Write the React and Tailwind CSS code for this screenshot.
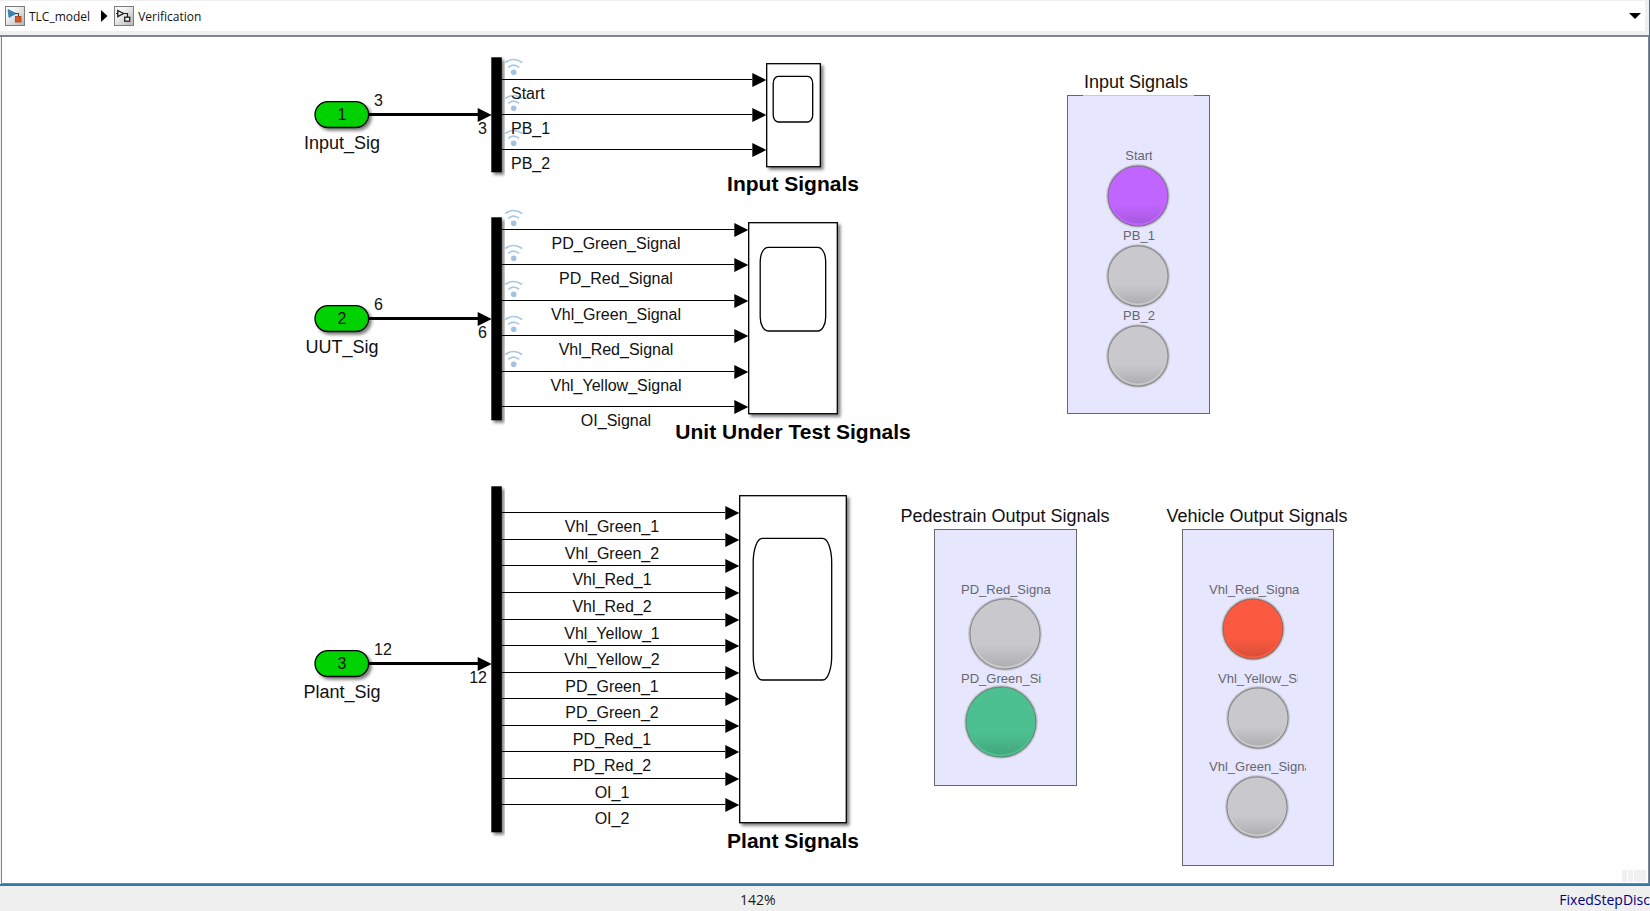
import React from "react";

// Diagram coordinates are window based; the canvas starts below the path bar.
const ORIGIN_X = 2;
const ORIGIN_Y = 37;
const place = (x, y) => ({ left: x - ORIGIN_X, top: y - ORIGIN_Y });

const ANCHOR = {
  left: "",
  center: "-translate-x-1/2",
  right: "-translate-x-full",
};

const TEXT = {
  lamp: { cls: "text-[13px] leading-5 text-[#66666e]", base: 14 },
  signal: { cls: "text-[16px] leading-5 text-[#111111]", base: 15 },
  block: { cls: "text-[18px] leading-5 text-[#111111]", base: 16 },
  title: { cls: "text-[21px] leading-6 font-bold text-black", base: 19 },
};

function Label({ kind, x, y, anchor = "center", children }) {
  const t = TEXT[kind];
  return (
    <span className={`absolute whitespace-nowrap ${t.cls} ${ANCHOR[anchor]}`} style={place(x, y - t.base)}>
      {children}
    </span>
  );
}

const groups = [
  {
    port: "1",
    name: "Input_Sig",
    width: "3",
    busY: 114,
    bar: [57, 172],
    title: "Input Signals",
    titleX: 793,
    titleY: 191,
    scope: { x: 766, y: 63, w: 55, h: 104 },
    screen: { x: 773, y: 76, w: 40, h: 46, rx: 5, ry: 7 },
    labelX: 511,
    labelAnchor: "left",
    signals: [
      ["Start", 79, 72],
      ["PB_1", 114, 108],
      ["PB_2", 149, 143],
    ],
  },
  {
    port: "2",
    name: "UUT_Sig",
    width: "6",
    busY: 318,
    bar: [217, 420],
    title: "Unit Under Test Signals",
    titleX: 793,
    titleY: 439,
    scope: { x: 748, y: 222, w: 90, h: 192 },
    screen: { x: 760, y: 247, w: 66, h: 84, rx: 8, ry: 14 },
    labelX: 616,
    labelAnchor: "center",
    signals: [
      ["PD_Green_Signal", 229, 223],
      ["PD_Red_Signal", 264, 258],
      ["Vhl_Green_Signal", 300, 294],
      ["Vhl_Red_Signal", 335, 329],
      ["Vhl_Yellow_Signal", 371, 364],
      ["OI_Signal", 406, null],
    ],
  },
  {
    port: "3",
    name: "Plant_Sig",
    width: "12",
    busY: 663,
    bar: [486, 832],
    title: "Plant Signals",
    titleX: 793,
    titleY: 848,
    scope: { x: 739, y: 495, w: 108, h: 328 },
    screen: { x: 753, y: 538, w: 79, h: 142, rx: 9, ry: 24 },
    labelX: 612,
    labelAnchor: "center",
    signals: [
      ["Vhl_Green_1", 512, null],
      ["Vhl_Green_2", 539, null],
      ["Vhl_Red_1", 565, null],
      ["Vhl_Red_2", 592, null],
      ["Vhl_Yellow_1", 619, null],
      ["Vhl_Yellow_2", 645, null],
      ["PD_Green_1", 672, null],
      ["PD_Green_2", 698, null],
      ["PD_Red_1", 725, null],
      ["PD_Red_2", 751, null],
      ["OI_1", 778, null],
      ["OI_2", 804, null],
    ],
  },
];

const panels = [
  {
    title: "Input Signals",
    titleX: 1136,
    titleY: 88,
    box: [1067, 95, 143, 319],
    gap: true,
    lamps: [
      { text: "Start", x: 1139, y: 160, cx: 1138.5, cy: 195.5, r: 32, color: "#c065ff" },
      { text: "PB_1", x: 1139, y: 240, cx: 1138.5, cy: 275.5, r: 32, color: "#c9c9cd" },
      { text: "PB_2", x: 1139, y: 320, cx: 1138.5, cy: 355.5, r: 32, color: "#c9c9cd" },
    ],
  },
  {
    title: "Pedestrain Output Signals",
    titleX: 1005,
    titleY: 522,
    box: [934, 529, 143, 257],
    lamps: [
      { text: "PD_Red_Signa", x: 961, y: 594, clip: 92, cx: 1005.8, cy: 633.8, r: 37, color: "#c9c9cd" },
      { text: "PD_Green_Si", x: 961, y: 683, clip: 92, cx: 1001, cy: 722.3, r: 37, color: "#4cc090" },
    ],
  },
  {
    title: "Vehicle Output Signals",
    titleX: 1257,
    titleY: 522,
    box: [1182, 529, 152, 337],
    lamps: [
      { text: "Vhl_Red_Signa", x: 1209, y: 594, clip: 92, cx: 1253.5, cy: 629.3, r: 32, color: "#fb5a40" },
      { text: "Vhl_Yellow_Si", x: 1218, y: 683, clip: 80, cx: 1258.3, cy: 718, r: 32, color: "#c9c9cd" },
      { text: "Vhl_Green_Signa", x: 1209, y: 771, clip: 97, cx: 1257.5, cy: 806.5, r: 32, color: "#c9c9cd" },
    ],
  },
];

function Arrow({ x, y }) {
  return <path d={`M${x - 14} ${y - 7}L${x} ${y}L${x - 14} ${y + 7}Z`} fill="#000" />;
}

function LogIcon({ x, y }) {
  return (
    <g fill="none" stroke="#a9c8e5" strokeWidth="1.6">
      <path d={`M${x - 8.5} ${y - 9.5}Q${x} ${y - 15.5} ${x + 8.5} ${y - 9.5}`} />
      <path d={`M${x - 5.5} ${y - 4.6}Q${x} ${y - 9.2} ${x + 5.5} ${y - 4.6}`} />
      <circle cx={x} cy={y + 0.2} r="2.8" fill="#a3c2e1" stroke="none" />
    </g>
  );
}

function Wiring() {
  return (
    <svg className="absolute left-0 top-0" width="900" height="840" viewBox="2 37 900 840" aria-hidden="true">
      <defs>
        <filter id="shade" x="-20%" y="-20%" width="150%" height="150%">
          <feDropShadow dx="2.5" dy="2.5" stdDeviation="1.6" floodColor="#000" floodOpacity="0.5" />
        </filter>
      </defs>
      {groups.map((g) => (
        <g key={g.port}>
          <rect x="315" y={g.busY - 12.3} width="53.6" height="25.8" rx="12.9" fill="#00d100" stroke="#000" strokeWidth="1.3" filter="url(#shade)" />
          <path d={`M369 ${g.busY + 0.5}H478`} stroke="#000" strokeWidth="3" />
          <rect x="491.3" y={g.bar[0] + 0.3} width="10.5" height={g.bar[1] - g.bar[0]} fill="#000" filter="url(#shade)" />
          <Arrow x={491.7} y={g.busY + 0.9} />
          <rect x={g.scope.x + 0.7} y={g.scope.y + 0.7} width={g.scope.w - 1.4} height={g.scope.h - 1} fill="#fff" stroke="#000" strokeWidth="1.3" filter="url(#shade)" />
          <rect x={g.screen.x + 0.2} y={g.screen.y + 0.4} width={g.screen.w - 0.5} height={g.screen.h - 0.4} rx={g.screen.rx} ry={g.screen.ry} fill="#fff" stroke="#000" strokeWidth="1.3" />
          {g.signals.map(([name, y, dot]) => (
            <g key={name}>
              <path d={`M502 ${y + 0.5}H${g.scope.x - 14}`} stroke="#000" strokeWidth="1" />
              <Arrow x={g.scope.x + 0.3} y={y + 1} />
              {dot !== null && <LogIcon x={513.7} y={dot} />}
            </g>
          ))}
        </g>
      ))}
    </svg>
  );
}

function Lamp({ lamp }) {
  const size = lamp.r * 2 + 2;
  const id = `glow-${lamp.text}`;
  return (
    <svg className="absolute" style={place(Math.floor(lamp.cx - lamp.r - 1), Math.round(lamp.cy - lamp.r - 1))} width={size} height={size} viewBox={`${-size / 2} ${-size / 2} ${size} ${size}`} role="img" aria-label={lamp.text}>
      <defs>
        <linearGradient id={id} x1="0" y1="0" x2="0" y2="1">
          <stop offset="0.66" stopColor="#000" stopOpacity="0" />
          <stop offset="1" stopColor="#000" stopOpacity="0.13" />
        </linearGradient>
      </defs>
      <circle r={lamp.r} fill="#cbcbd3" />
      <circle r={lamp.r - 1.9} fill={lamp.color} stroke="#55555a" strokeOpacity="0.55" strokeWidth="1.2" />
      <circle r={lamp.r - 4.5} fill={`url(#${id})`} />
    </svg>
  );
}

function Panel({ panel }) {
  const [x, y, w, h] = panel.box;
  return (
    <section aria-label={panel.title}>
      <div className="absolute border border-[#66666f] bg-[#e6e6ff]" style={{ ...place(x, y), width: w, height: h }} />
      {panel.gap && <div className="absolute h-px bg-[#c9c9dc]" style={{ ...place(x + 16, y), width: w - 32 }} />}
      <Label kind="block" x={panel.titleX} y={panel.titleY}>
        {panel.title}
      </Label>
      {panel.lamps.map((lamp) => (
        <React.Fragment key={lamp.text}>
          <span
            className={`absolute overflow-hidden whitespace-nowrap ${TEXT.lamp.cls} ${lamp.clip ? "" : "-translate-x-1/2"}`}
            style={{ ...place(lamp.x, lamp.y - TEXT.lamp.base), width: lamp.clip }}
          >
            {lamp.text}
          </span>
          <Lamp lamp={lamp} />
        </React.Fragment>
      ))}
    </section>
  );
}

function IconFrame({ id, children }) {
  return (
    <svg className="size-5 shrink-0" viewBox="0 0 20 20" aria-hidden="true">
      <defs>
        <linearGradient id={id} x1="0" y1="0" x2="1" y2="1">
          <stop offset="0.3" stopColor="#f6f6f6" />
          <stop offset="1" stopColor="#b4b4b4" />
        </linearGradient>
      </defs>
      <rect x="0.5" y="0.5" width="19" height="19" fill={`url(#${id})`} stroke="#7d7d7d" />
      {children}
    </svg>
  );
}

function PathBar() {
  return (
    <header className="flex h-[37px] items-start border-b-2 border-[#7f8490] bg-[#efefef] pt-px pr-1">
      <nav aria-label="Model path" className="flex h-[30px] flex-1 items-center bg-white pl-[5px] font-['Open_Sans','Noto_Sans',sans-serif] text-[12px] text-[#111111]">
        <a href="#model" className="flex items-center gap-1">
          <IconFrame id="model-face">
            <path d="M3 3.5L11 7.5L4 11.5Z" fill="#2f86b8" stroke="#226a96" strokeWidth="0.6" />
            <path d="M10 7.5H13.5V11" fill="none" stroke="#444" strokeWidth="1.1" />
            <rect x="10.5" y="10.5" width="5.5" height="5.5" fill="#d8572a" stroke="#a83c14" strokeWidth="0.8" />
          </IconFrame>
          <span className="pt-0.5">TLC_model</span>
        </a>
        <svg className="mr-1.5 ml-2.5 h-3 w-2" viewBox="0 0 8 12" aria-hidden="true">
          <path d="M1 0L7.5 6L1 12Z" fill="#000" />
        </svg>
        <a href="#verification" className="flex items-center gap-1">
          <IconFrame id="sub-face">
            <path d="M3.8 4.5L9.5 7.5L3.8 10.5Z" fill="none" stroke="#222" strokeWidth="1.4" />
            <path d="M2 7.5H4M9.5 7.5H13.5V11" fill="none" stroke="#222" strokeWidth="1.2" />
            <rect x="10.7" y="11.2" width="5" height="4" fill="#eee" stroke="#222" strokeWidth="1.3" />
          </IconFrame>
          <span className="pt-0.5">Verification</span>
        </a>
        <button type="button" aria-label="Path history" className="mr-1 ml-auto flex h-6 w-3 items-center justify-center">
          <svg className="h-[6px] w-3" viewBox="0 0 12 6" aria-hidden="true">
            <path d="M0 0H12L6 6Z" fill="#000" />
          </svg>
        </button>
      </nav>
    </header>
  );
}

export default function App() {
  return (
    <div className="flex min-h-screen flex-col overflow-hidden bg-[#efefef]">
      <div className="flex flex-1 flex-col border-b-2 border-[#3478a8]">
        <div className="flex flex-1 flex-col border-r border-[#3478a8]">
          <PathBar />
          <main className="relative ml-px min-h-[840px] flex-1 overflow-hidden border-r border-b border-l border-[#7f8490] bg-white font-['Liberation_Sans',Arial,sans-serif]">
            <Wiring />
            {groups.map((g) => (
              <section key={g.port} aria-label={g.title}>
                <Label kind="signal" x={342} y={g.busY + 6}>{g.port}</Label>
                <Label kind="block" x={342} y={g.busY + 35}>{g.name}</Label>
                <Label kind="signal" x={374} y={g.busY - 8} anchor="left">{g.width}</Label>
                <Label kind="signal" x={487} y={g.busY + 20} anchor="right">{g.width}</Label>
                {g.signals.map(([name, y]) => (
                  <Label key={name} kind="signal" x={g.labelX} y={y + 20} anchor={g.labelAnchor}>{name}</Label>
                ))}
                <Label kind="title" x={g.titleX} y={g.titleY}>{g.title}</Label>
              </section>
            ))}
            {panels.map((p) => (
              <Panel key={p.titleX} panel={p} />
            ))}
            <div className="absolute right-[2px] bottom-px flex h-3 gap-px" aria-hidden="true">
              <div className="w-[5px] bg-[#f0f0f0]" />
              <div className="w-[5px] bg-[#f0f0f0]" />
              <div className="w-3 bg-[#f0f0f0]" />
            </div>
          </main>
        </div>
      </div>
      <footer className="grid h-[25px] grid-cols-[47%_1fr] items-center overflow-hidden pt-0.5 whitespace-nowrap font-['Open_Sans','Noto_Sans',sans-serif] text-[14px] leading-5">
        <span className="justify-self-end text-[#1a1a1a]">142%</span>
        <span className="justify-self-end text-[#00007f]">FixedStepDisc</span>
      </footer>
    </div>
  );
}
